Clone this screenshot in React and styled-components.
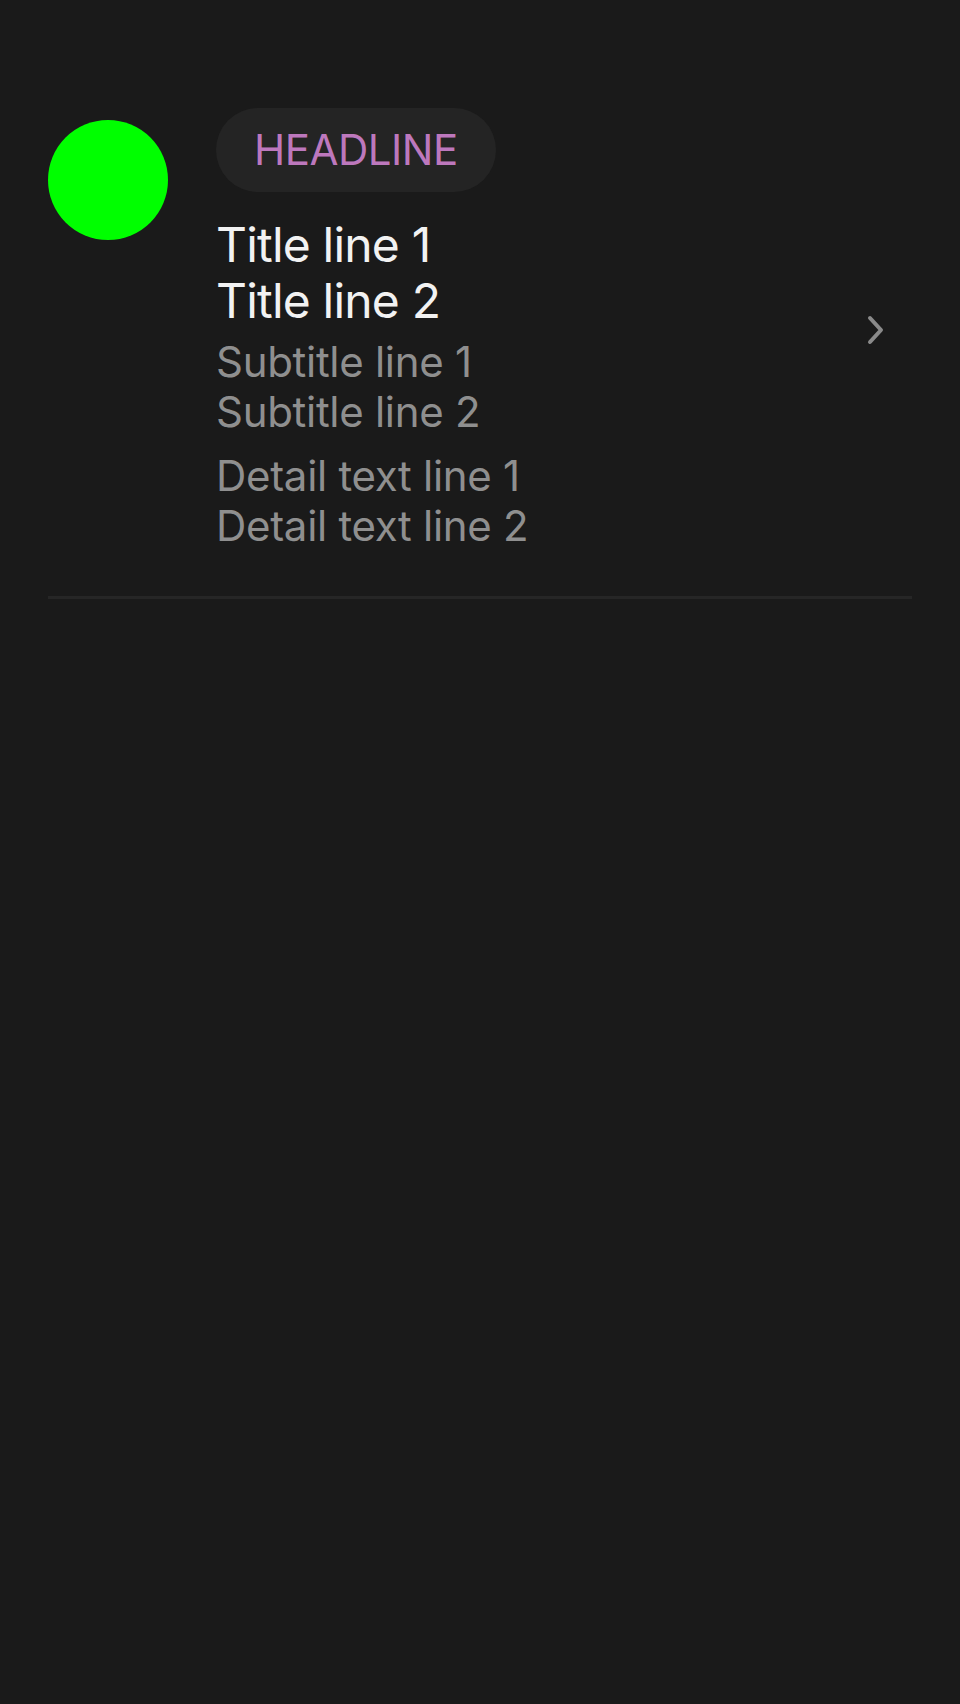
import React from "react";
import styled, { createGlobalStyle } from "styled-components";

const GlobalStyle = createGlobalStyle`
  html, body {
    margin: 0;
    padding: 0;
    background: #1a1a1a;
    min-height: 100%;
  }
  body {
    min-height: 100vh;
    font-family: Inter, "Noto Sans", "Liberation Sans", sans-serif;
    -webkit-font-smoothing: antialiased;
  }
`;

const Page = styled.div`
  min-height: 100vh;
  background: #1a1a1a;
`;

const Row = styled.div`
  display: flex;
  align-items: flex-start;
  margin: 0 48px;
  padding: 108px 0 45px;
  border-bottom: 3px solid #262626;
`;

const Avatar = styled.div`
  flex: none;
  width: 120px;
  height: 120px;
  margin-top: 12px;
  border-radius: 50%;
  background: ${(p) => p.color};
`;

const Body = styled.div`
  flex: 1;
  display: flex;
  flex-direction: column;
  align-items: flex-start;
  margin-left: 48px;
`;

const Tag = styled.span`
  display: inline-flex;
  align-items: center;
  height: 84px;
  padding: 0 38px;
  border-radius: 42px;
  background: #242424;
  color: #bd78bd;
  font-size: 42px;
  line-height: 1;
  letter-spacing: -0.5px;
`;

const Text = styled.div`
  font-size: ${(p) => p.size}px;
  line-height: ${(p) => p.lh}px;
  letter-spacing: ${(p) => p.track}px;
  color: ${(p) => p.color};
  margin-top: ${(p) => p.gap}px;
  white-space: pre-line;
`;

const Chevron = styled.svg`
  flex: none;
  align-self: center;
  width: 20px;
  height: 32px;
  margin-right: 26px;
`;

export default function App() {
  return (
    <Page>
      <GlobalStyle />
      <Row>
        <Avatar color="#00ff00" />
        <Body>
          <Tag>HEADLINE</Tag>
          <Text size={48} lh={56} track={-0.8} color="#f2f2f2" gap={25}>
            {"Title line 1\nTitle line 2"}
          </Text>
          <Text size={42} lh={50} track={-0.3} color="#8f8f8f" gap={8}>
            {"Subtitle line 1\nSubtitle line 2"}
          </Text>
          <Text size={42} lh={50} track={-0.3} color="#8f8f8f" gap={14}>
            {"Detail text line 1\nDetail text line 2"}
          </Text>
        </Body>
        <Chevron viewBox="0 0 20 32">
          <path
            d="M4 4 L15 16 L4 28"
            fill="none"
            stroke="#8a8a8a"
            strokeWidth="4"
            strokeLinecap="round"
            strokeLinejoin="round"
          />
        </Chevron>
      </Row>
    </Page>
  );
}
